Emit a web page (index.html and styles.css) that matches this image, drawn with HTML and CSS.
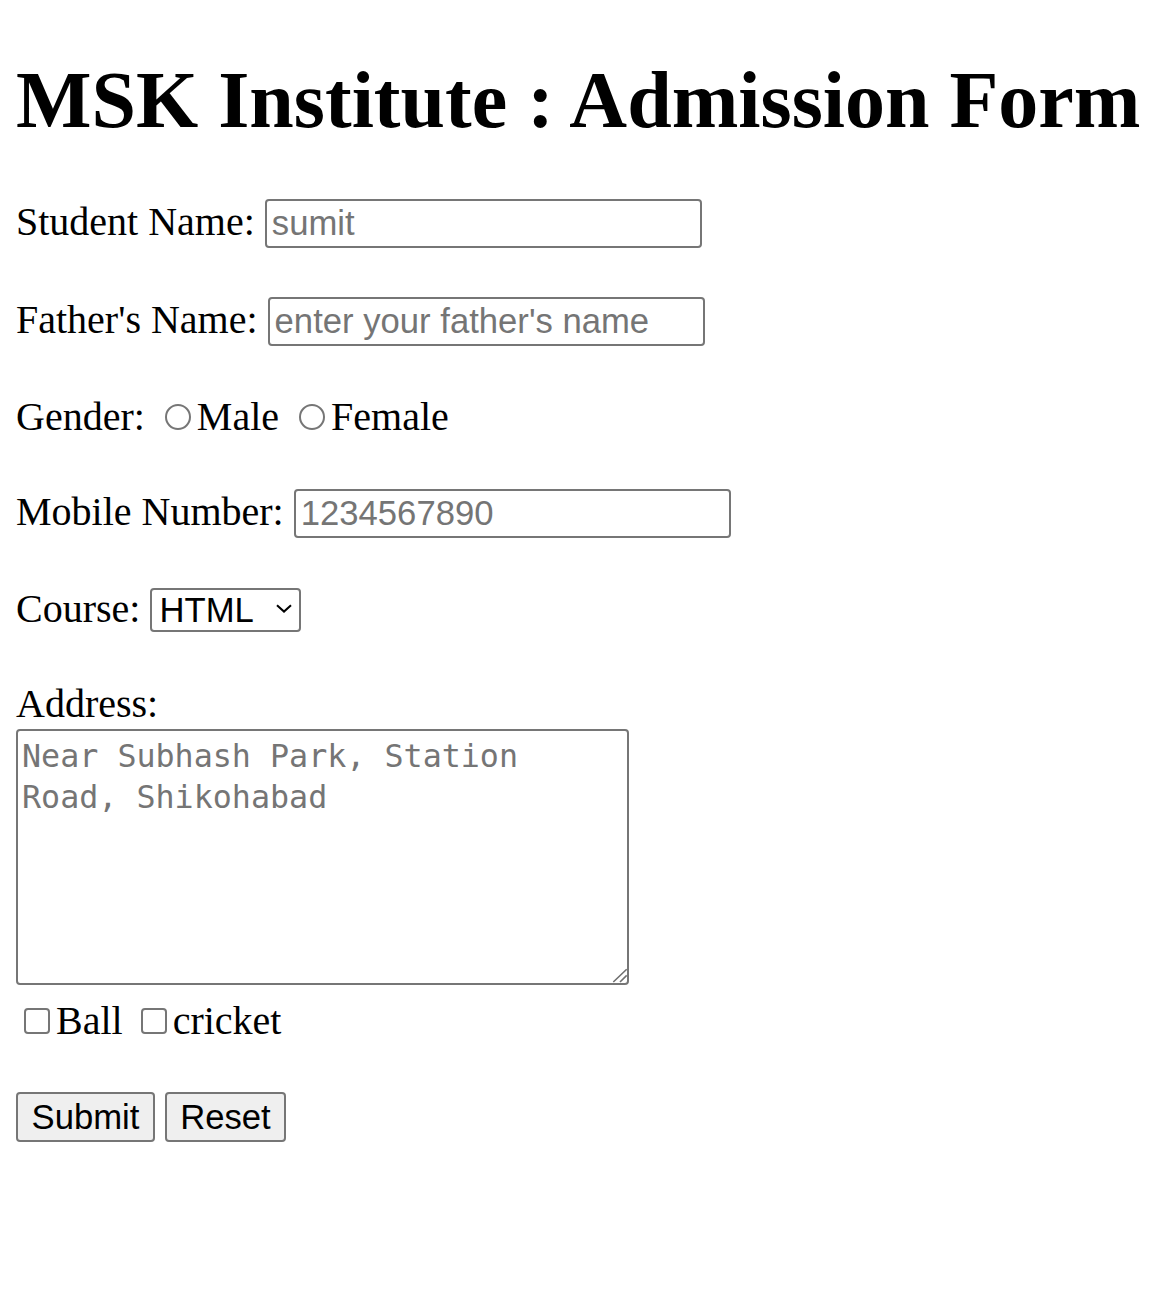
FILE: index.html
```html
<!DOCTYPE html>
<html lang="en">
<head>
<meta charset="utf-8">
<title>MSK Institute : Admission Form</title>
<link rel="stylesheet" href="styles.css">
</head>
<body>
<h1 class="title">MSK Institute : Admission Form</h1>
<form class="form">
  <div class="row">Student Name: <input class="field" type="text" placeholder="sumit"></div>
  <div class="row">Father's Name: <input class="field" type="text" placeholder="enter your father's name"></div>
  <div class="row">Gender: <input class="radio" type="radio" name="g"><span>Male</span> <input class="radio" type="radio" name="g"><span>Female</span></div>
  <div class="row">Mobile Number: <input class="field" type="text" placeholder="1234567890"></div>
  <div class="row">Course: <span class="select-wrap"><select class="select"><option>HTML</option><option>CSS</option></select><svg class="chevron" width="16" height="9" viewBox="0 0 16 9"><path d="M1 1.2 L8 7.6 L15 1.2" fill="none" stroke="#000" stroke-width="2"/></svg></span></div>
  <div class="label-row">Address:</div>
  <div class="area-wrap">
    <textarea class="area" placeholder="Near Subhash Park, Station Road, Shikohabad"></textarea>
    <svg class="grip" width="16" height="16" viewBox="0 0 16 16"><path d="M2.3 14 L15.7 1.3 M9 14 L15.7 7.4" fill="none" stroke="#6f6f6f" stroke-width="1.6"/></svg>
  </div>
  <div class="row check-row"><input class="check" type="checkbox"><span>Ball</span> <input class="check" type="checkbox"><span>cricket</span></div>
  <div class="row"><button class="btn btn-submit" type="submit">Submit</button> <button class="btn btn-reset" type="reset">Reset</button></div>
</form>
</body>
</html>
```
FILE: styles.css
```css
html, body {
  background: #fff;
}
body {
  margin: 0 16px 16px;
  font-family: "Liberation Serif", "Times New Roman", serif;
  font-size: 40px;
  line-height: 46px;
  color: #000;
}
.title {
  font-size: 80px;
  line-height: 92px;
  font-weight: bold;
  margin: 53.6px 0;
}
.form {
  margin: 0;
}
.row {
  margin-bottom: 48.5px;
  white-space: nowrap;
}
.label-row {
  margin: 0;
}
.field {
  box-sizing: border-box;
  width: 437px;
  height: 49px;
  border: 2px solid #767676;
  border-radius: 4px;
  padding: 0 5px;
  margin: 0;
  font-family: "Liberation Sans", Arial, sans-serif;
  font-size: 34.67px;
  color: #000;
  background: #fff;
  outline: none;
}
.field::placeholder {
  color: #757575;
  opacity: 1;
}
.radio {
  -webkit-appearance: none;
  appearance: none;
  box-sizing: border-box;
  width: 26px;
  height: 26px;
  border: 2px solid #767676;
  border-radius: 50%;
  margin: 6px 6px 0 10px;
  padding: 0;
  background: #fff;
}
.select-wrap {
  position: relative;
  display: inline-block;
}
.select {
  -webkit-appearance: none;
  appearance: none;
  box-sizing: border-box;
  width: 151px;
  height: 44px;
  border: 2px solid #767676;
  border-radius: 4px;
  padding: 0 7px;
  margin: 0;
  font-family: "Liberation Sans", Arial, sans-serif;
  font-size: 34.67px;
  color: #000;
  background: #fff;
}
.chevron {
  position: absolute;
  right: 9px;
  top: 18px;
  pointer-events: none;
}
.area-wrap {
  position: relative;
  width: 613px;
  height: 256px;
  margin: 2px 0 13px;
}
.area {
  display: block;
  box-sizing: border-box;
  width: 613px;
  height: 256px;
  margin: 0;
  border: 2px solid #767676;
  border-radius: 4px;
  padding: 5px 4px;
  resize: none;
  font-family: "DejaVu Sans Mono", "Liberation Mono", monospace;
  font-size: 31.7px;
  line-height: 41px;
  color: #000;
  background: #fff;
  outline: none;
}
.area::placeholder {
  color: #757575;
  opacity: 1;
}
.grip {
  position: absolute;
  left: 595px;
  top: 239px;
  pointer-events: none;
}
.check {
  -webkit-appearance: none;
  appearance: none;
  box-sizing: border-box;
  width: 26px;
  height: 26px;
  border: 2px solid #767676;
  border-radius: 4px;
  margin: 6px 6px 0 8px;
  padding: 0;
  background: #fff;
}
.btn {
  box-sizing: border-box;
  height: 50px;
  border: 2px solid #767676;
  border-radius: 4px;
  background: #efefef;
  padding: 0;
  margin: 0;
  font-family: "Liberation Sans", Arial, sans-serif;
  font-size: 34.67px;
  color: #000;
}
.btn-submit {
  width: 139px;
}
.btn-reset {
  width: 121px;
}
```
